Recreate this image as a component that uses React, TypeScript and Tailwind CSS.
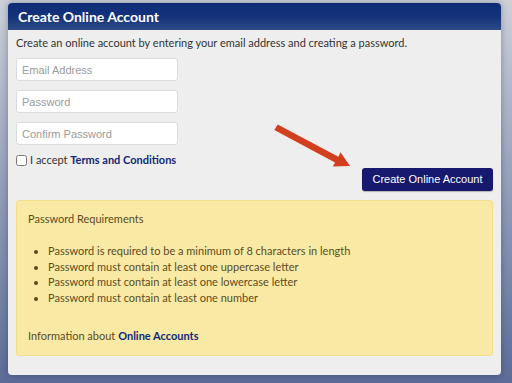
const requirements = [
  'Password is required to be a minimum of 8 characters in length',
  'Password must contain at least one uppercase letter',
  'Password must contain at least one lowercase letter',
  'Password must contain at least one number',
];

const Field = ({ placeholder, type = 'text' }: { placeholder: string; type?: string }) => (
  <input
    type={type}
    placeholder={placeholder}
    className="w-[162px] h-[23px] rounded-[3px] border border-[#dcdcdc] bg-white px-[5px] text-[11px] text-[#333] placeholder:text-[#9a9a9a] outline-none font-['Liberation_Sans',Arial,sans-serif]"
  />
);

const Arrow = () => (
  <svg className="absolute inset-0 pointer-events-none" width="512" height="383" viewBox="0 0 512 383">
    <polygon
      points="277.7,124.4 338.4,156.8 340.5,152.3 350,166 332.9,166.4 335,162.4 274.3,130.1"
      fill="#d23f1f"
    />
  </svg>
);

export default function App() {
  return (
    <div className="relative w-[512px] h-[383px] overflow-hidden bg-linear-to-b from-[#cdd0d9] to-[#5c6c98] pt-[3px] pl-[8px] font-['Lato','Open_Sans',sans-serif]">
      <div className="w-[493px] h-[372px] rounded-[4px] bg-[#eeeeee] shadow-[0_0_6px_rgba(20,30,60,0.35)] overflow-hidden flex flex-col">
        <div className="h-[27px] shrink-0 flex items-center px-[10px] bg-linear-to-b from-[#0f2c77] via-[#14327a] to-[#2e4a86]">
          <h1 className="text-[14px] font-bold text-white leading-none">Create Online Account</h1>
        </div>
        <div className="flex flex-col px-[8px] pt-[5px]">
          <p className="text-[11px] leading-[16px] text-[#333]">
            Create an online account by entering your email address and creating a password.
          </p>
          <div className="mt-[7px] flex flex-col gap-[9px]">
            <Field placeholder="Email Address" type="email" />
            <Field placeholder="Password" type="password" />
            <Field placeholder="Confirm Password" type="password" />
          </div>
          <label className="mt-[7px] h-[16px] flex items-center gap-[3px] text-[11px] text-[#333]">
            <input type="checkbox" className="w-[11px] h-[11px] m-0" />
            <span>
              I accept <a href="#" className="font-bold text-[#11287a]">Terms and Conditions</a>
            </span>
          </label>
          <div className="flex justify-end">
            <button className="w-[131px] h-[23px] rounded-[3px] bg-[#17196e] text-white text-[11px] font-['Liberation_Sans',Arial,sans-serif] shadow-[0_1px_1px_rgba(0,0,0,0.25)]">
              Create Online Account
            </button>
          </div>
          <div className="mt-[9px] h-[156px] rounded-[3px] border border-[#f1de8e] bg-[#f8eaa4] px-[11px] pt-[10px] text-[11px] text-[#5e4a1f]">
            <p className="leading-[16px]">Password Requirements</p>
            <ul className="mt-[16px] list-disc pl-[20px] leading-[15.6px]">
              {requirements.map((r) => (
                <li key={r}>{r}</li>
              ))}
            </ul>
            <p className="mt-[23px] leading-[16px]">
              Information about <a href="#" className="font-bold text-[#11287a]">Online Accounts</a>
            </p>
          </div>
        </div>
      </div>
      <Arrow />
    </div>
  );
}
